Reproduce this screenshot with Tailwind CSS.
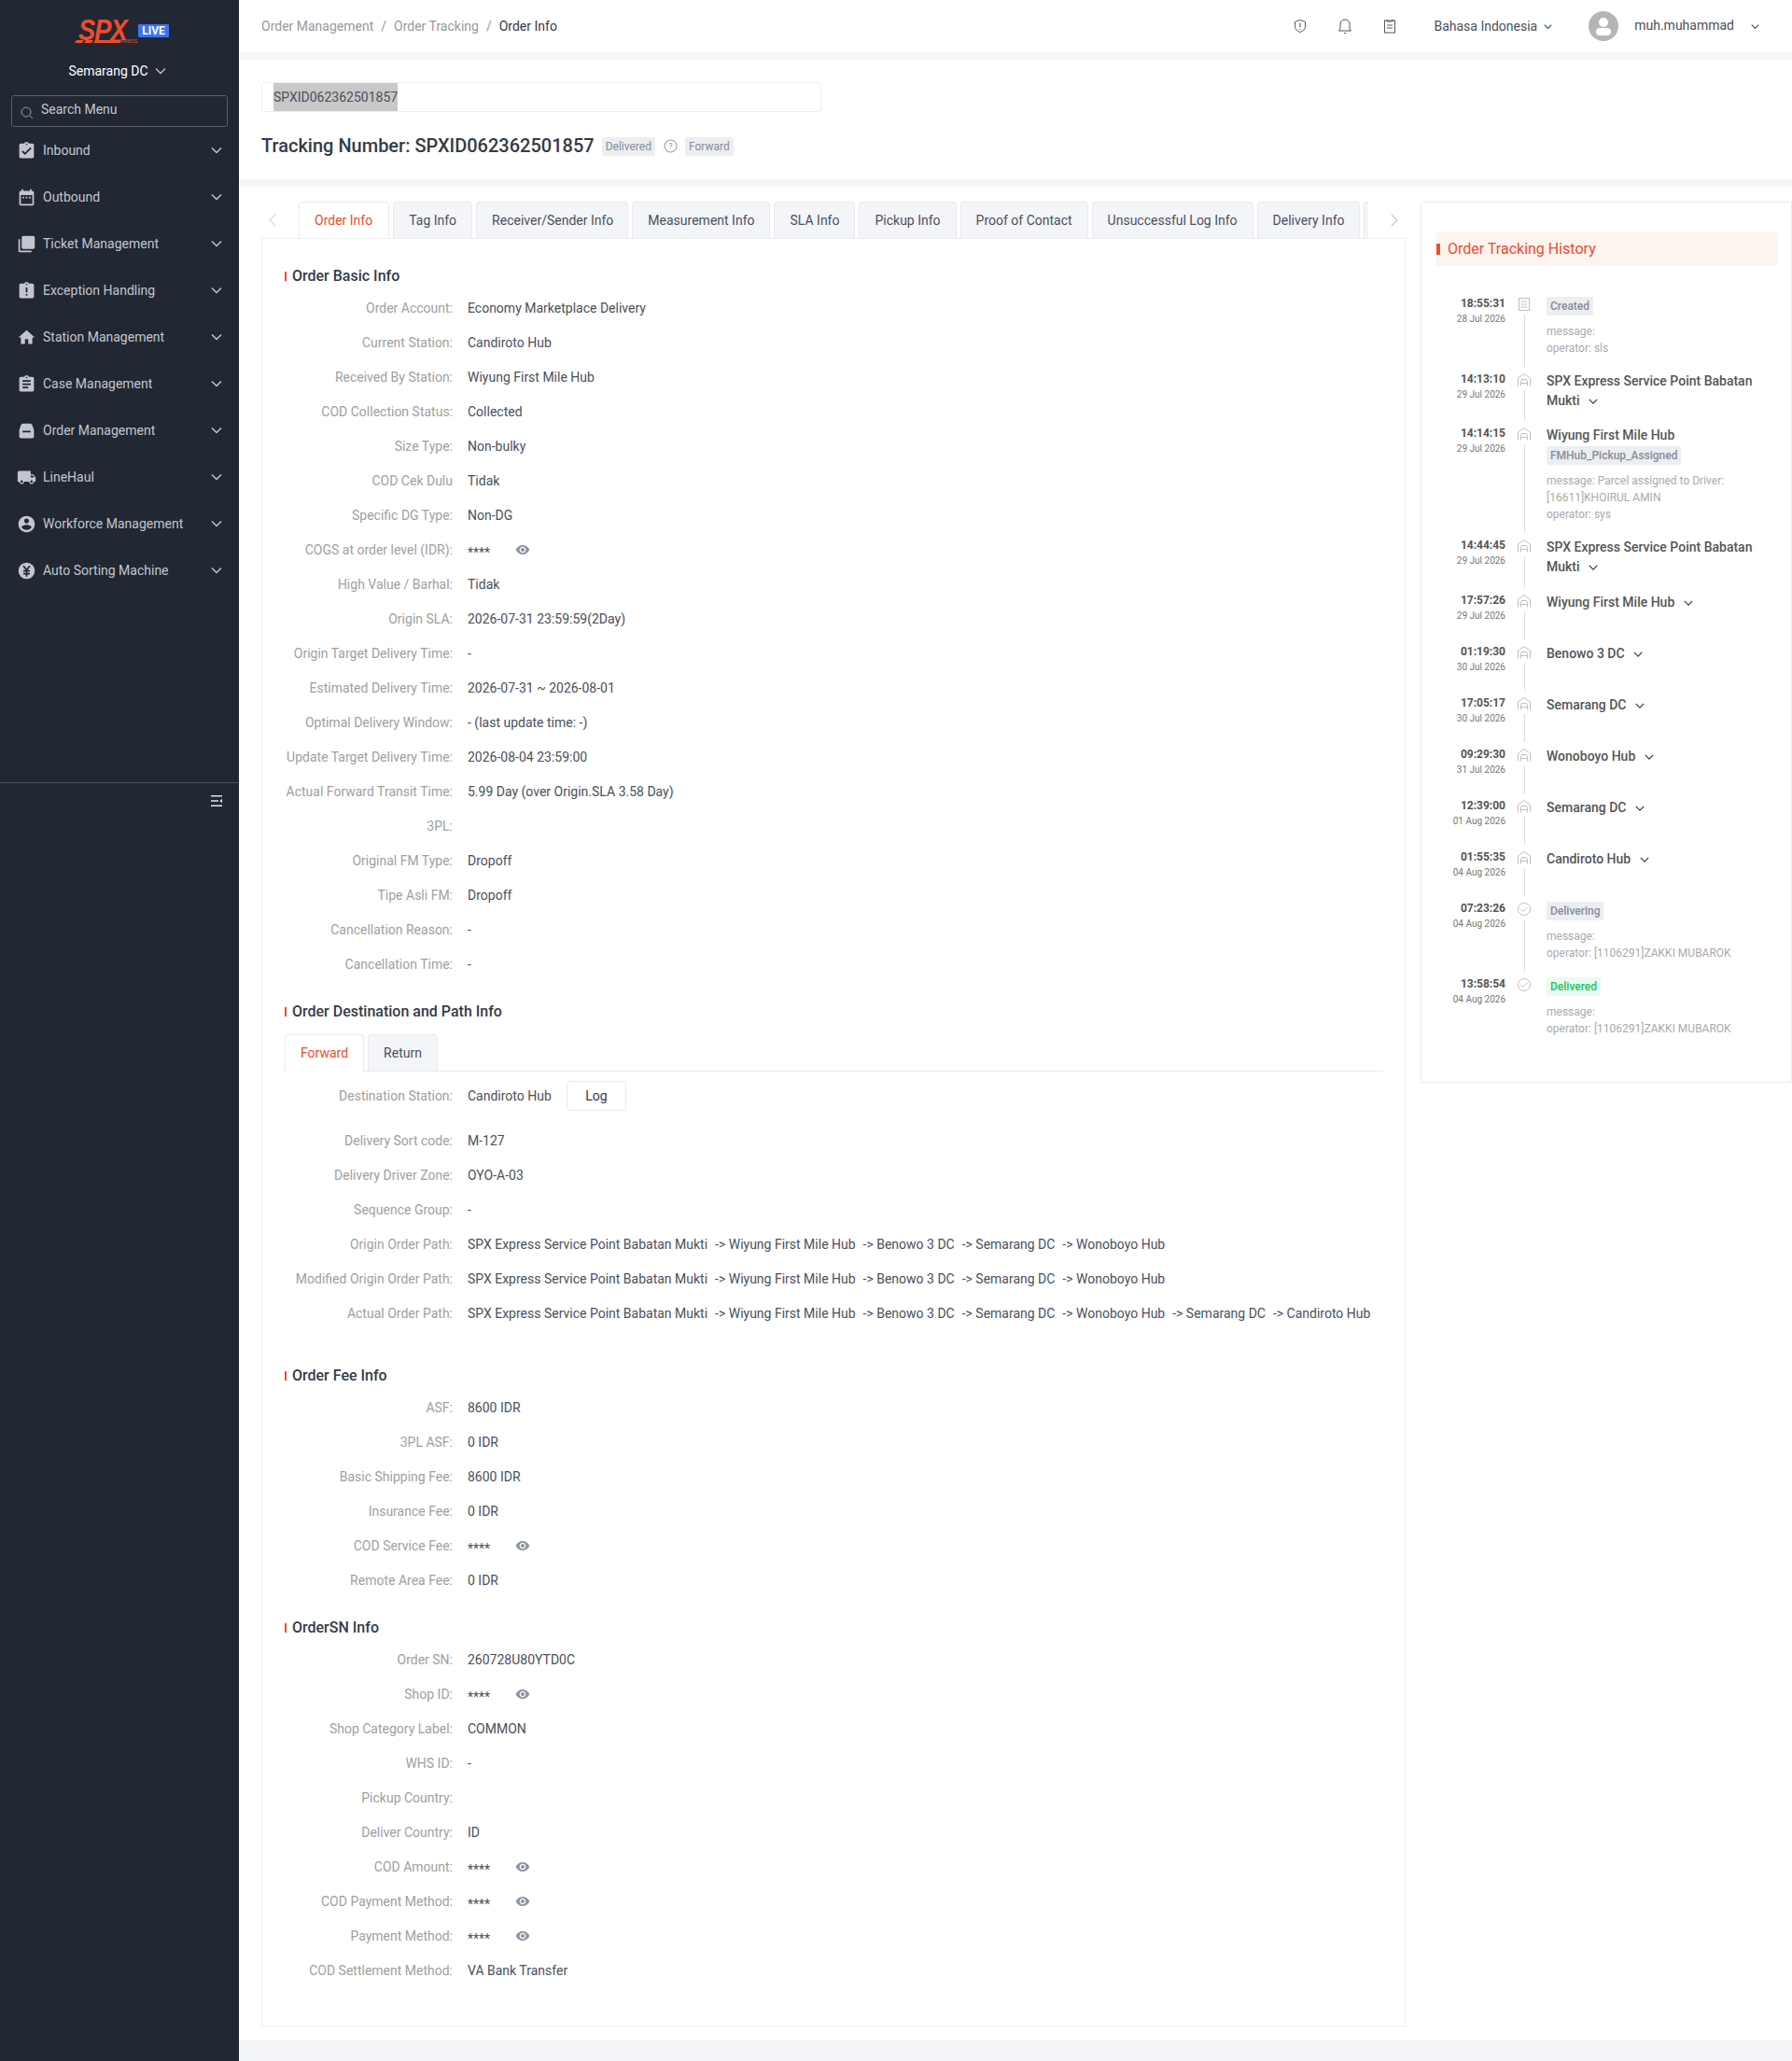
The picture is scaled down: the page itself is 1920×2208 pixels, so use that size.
<!DOCTYPE html>
<html lang="en">
<head>
    <meta charset="UTF-8">
    <meta name="viewport" content="width=device-width, initial-scale=1.0">
    <title>SPX | Order Info</title>
    <script src="https://cdn.jsdelivr.net/npm/@tailwindcss/browser@4"></script>
</head>
<body class="font-['Roboto',sans-serif] text-sm text-[#4a505c]">
<div class="flex h-[2208px] w-[1920px] overflow-hidden bg-[#f4f5f9]">

    <!-- sidebar -->
    <aside class="flex flex-col w-64 shrink-0 bg-[#212733] text-[#c3c7cd]">
        <div class="flex items-start h-[58px] pl-[79px] pt-[20px]">
            <div class="relative w-[66px] h-[26px]">
                <span class="absolute left-[5px] top-[-4px] origin-left scale-x-[.85] text-[32px] leading-[32px] font-black italic text-[#ee4d2d] tracking-[-1px] font-['Liberation_Sans',sans-serif]">SPX</span>
                <span class="absolute left-[2px] bottom-0 w-[8px] h-[3px] bg-[#ee4d2d] -skew-x-30"></span>
                <span class="absolute left-[12px] bottom-0 w-[8px] h-[3px] bg-[#ee4d2d] -skew-x-30"></span>
                <span class="absolute left-[22px] bottom-0 w-[28px] h-[3px] bg-[#ee4d2d] -skew-x-30"></span>
                <span class="absolute left-[43px] bottom-[-1px] text-[6px] leading-[6px] text-[#ee4d2d]">EXPRESS</span>
            </div>
            <span class="ml-[3px] mt-[6px] w-[33px] h-[14px] rounded-[1px] bg-[#3b74f2] text-white text-[12px] leading-[14px] font-bold text-center">LIVE</span>
        </div>
        <div class="flex items-center justify-center gap-[6px] h-9 pr-[5px] text-white">
            <span class="mr-[1px]">Semarang DC</span>
            <svg class="w-3 h-3" viewBox="0 0 12 12" fill="none" stroke="#c3c7cd" stroke-width="1.3"><path d="M1 3.5l5 5 5-5"/></svg>
        </div>
        <div class="flex items-start h-[34px] mx-3 mt-2 border border-[#5b616c] rounded-[3px] pl-[9px] pt-[6px]">
            <svg class="w-[14px] h-[14px] mt-[5px]" viewBox="0 0 14 14" fill="none" stroke="#9ca1a9" stroke-width="1"><circle cx="6" cy="6" r="5"/><path d="M10 10l3 3"/></svg>
            <span class="ml-[8px] leading-[16px]">Search Menu</span>
        </div>

        <nav>
            <div class="flex items-center h-[50px] pl-[18px] pr-[18px]">
                <svg class="w-[21px] h-[21px] fill-[#c3c7cd]" viewBox="0 0 24 24"><path d="M19 3h-4.18C14.4 1.84 13.3 1 12 1c-1.3 0-2.4.84-2.82 2H5c-1.1 0-2 .9-2 2v14c0 1.1.9 2 2 2h14c1.1 0 2-.9 2-2V5c0-1.1-.9-2-2-2zm-7 0c.55 0 1 .45 1 1s-.45 1-1 1-1-.45-1-1 .45-1 1-1zm-2 14l-4-4 1.41-1.41L10 14.17l6.59-6.59L18 9l-8 8z"/></svg>
                <span class="ml-[7px] flex-1">Inbound</span>
                <svg class="w-3 h-3" viewBox="0 0 12 12" fill="none" stroke="#c3c7cd" stroke-width="1.5"><path d="M1 3.5l5 5 5-5"/></svg>
            </div>
            <div class="flex items-center h-[50px] pl-[18px] pr-[18px]">
                <svg class="w-[21px] h-[21px] fill-[#c3c7cd]" viewBox="0 0 24 24"><path d="M9 11H7v2h2v-2zm4 0h-2v2h2v-2zm4 0h-2v2h2v-2zm2-7h-1V2h-2v2H8V2H6v2H5c-1.11 0-1.99.9-1.99 2L3 20c0 1.1.89 2 2 2h14c1.1 0 2-.9 2-2V6c0-1.1-.9-2-2-2zm0 16H5V9h14v11z"/></svg>
                <span class="ml-[7px] flex-1">Outbound</span>
                <svg class="w-3 h-3" viewBox="0 0 12 12" fill="none" stroke="#c3c7cd" stroke-width="1.5"><path d="M1 3.5l5 5 5-5"/></svg>
            </div>
            <div class="flex items-center h-[50px] pl-[18px] pr-[18px]">
                <svg class="w-[21px] h-[21px] fill-[#c3c7cd]" viewBox="0 0 24 24"><path d="M4 6H2v14c0 1.1.9 2 2 2h14v-2H4V6zm16-4H8c-1.1 0-2 .9-2 2v12c0 1.1.9 2 2 2h12c1.1 0 2-.9 2-2V4c0-1.1-.9-2-2-2z"/></svg>
                <span class="ml-[7px] flex-1">Ticket Management</span>
                <svg class="w-3 h-3" viewBox="0 0 12 12" fill="none" stroke="#c3c7cd" stroke-width="1.5"><path d="M1 3.5l5 5 5-5"/></svg>
            </div>
            <div class="flex items-center h-[50px] pl-[18px] pr-[18px]">
                <svg class="w-[21px] h-[21px] fill-[#c3c7cd]" viewBox="0 0 24 24"><path d="M19 3h-4.18C14.4 1.84 13.3 1 12 1c-1.3 0-2.4.84-2.82 2H5c-1.1 0-2 .9-2 2v14c0 1.1.9 2 2 2h14c1.1 0 2-.9 2-2V5c0-1.1-.9-2-2-2zm-6 15h-2v-2h2v2zm0-4h-2V8h2v6zm-1-9c-.55 0-1-.45-1-1s.45-1 1-1 1 .45 1 1-.45 1-1 1z"/></svg>
                <span class="ml-[7px] flex-1">Exception Handling</span>
                <svg class="w-3 h-3" viewBox="0 0 12 12" fill="none" stroke="#c3c7cd" stroke-width="1.5"><path d="M1 3.5l5 5 5-5"/></svg>
            </div>
            <div class="flex items-center h-[50px] pl-[18px] pr-[18px]">
                <svg class="w-[21px] h-[21px] fill-[#c3c7cd]" viewBox="0 0 24 24"><path d="M10 20v-6h4v6h5v-8h3L12 3 2 12h3v8z"/></svg>
                <span class="ml-[7px] flex-1">Station Management</span>
                <svg class="w-3 h-3" viewBox="0 0 12 12" fill="none" stroke="#c3c7cd" stroke-width="1.5"><path d="M1 3.5l5 5 5-5"/></svg>
            </div>
            <div class="flex items-center h-[50px] pl-[18px] pr-[18px]">
                <svg class="w-[21px] h-[21px] fill-[#c3c7cd]" viewBox="0 0 24 24"><path d="M19 3h-4.18C14.4 1.84 13.3 1 12 1c-1.3 0-2.4.84-2.82 2H5c-1.1 0-2 .9-2 2v14c0 1.1.9 2 2 2h14c1.1 0 2-.9 2-2V5c0-1.1-.9-2-2-2zm-7 0c.55 0 1 .45 1 1s-.45 1-1 1-1-.45-1-1 .45-1 1-1zm2 14H7v-2h7v2zm3-4H7v-2h10v2zm0-4H7V7h10v2z"/></svg>
                <span class="ml-[7px] flex-1">Case Management</span>
                <svg class="w-3 h-3" viewBox="0 0 12 12" fill="none" stroke="#c3c7cd" stroke-width="1.5"><path d="M1 3.5l5 5 5-5"/></svg>
            </div>
            <div class="flex items-center h-[50px] pl-[18px] pr-[18px]">
                <svg class="w-[21px] h-[21px] fill-[#c3c7cd]" viewBox="0 0 24 24"><path fill-rule="evenodd" d="M8 3h8c1.500 0 2.500.8 3 2l2 6v8c0 1.100-.9 2-2 2H5c-1.100 0-2-.9-2-2v-8l2-6c.5-1.200 1.500-2 3-2zM7 12v2h10v-2H7z"/></svg>
                <span class="ml-[7px] flex-1">Order Management</span>
                <svg class="w-3 h-3" viewBox="0 0 12 12" fill="none" stroke="#c3c7cd" stroke-width="1.5"><path d="M1 3.5l5 5 5-5"/></svg>
            </div>
            <div class="flex items-center h-[50px] pl-[18px] pr-[18px]">
                <svg class="w-[21px] h-[21px] fill-[#c3c7cd]" viewBox="0 0 24 24"><path d="M20 8h-3V4H3c-1.1 0-2 .9-2 2v11h2c0 1.66 1.34 3 3 3s3-1.34 3-3h6c0 1.66 1.34 3 3 3s3-1.34 3-3h2v-5l-3-4zM6 18.5c-.83 0-1.5-.67-1.5-1.5s.67-1.5 1.5-1.5 1.5.67 1.5 1.5-.67 1.5-1.5 1.5zm13.5-9l1.96 2.5H17V9.5h2.5zm-1.5 9c-.83 0-1.5-.67-1.5-1.5s.67-1.5 1.5-1.5 1.5.67 1.5 1.5-.67 1.5-1.5 1.5z"/></svg>
                <span class="ml-[7px] flex-1">LineHaul</span>
                <svg class="w-3 h-3" viewBox="0 0 12 12" fill="none" stroke="#c3c7cd" stroke-width="1.5"><path d="M1 3.5l5 5 5-5"/></svg>
            </div>
            <div class="flex items-center h-[50px] pl-[18px] pr-[18px]">
                <svg class="w-[21px] h-[21px] fill-[#c3c7cd]" viewBox="0 0 24 24"><path d="M12 2C6.48 2 2 6.48 2 12s4.48 10 10 10 10-4.48 10-10S17.52 2 12 2zm0 3c1.66 0 3 1.34 3 3s-1.34 3-3 3-3-1.34-3-3 1.34-3 3-3zm0 14.2c-2.5 0-4.71-1.28-6-3.22.03-1.99 4-3.08 6-3.08 1.99 0 5.97 1.09 6 3.08-1.29 1.94-3.5 3.22-6 3.22z"/></svg>
                <span class="ml-[7px] flex-1">Workforce Management</span>
                <svg class="w-3 h-3" viewBox="0 0 12 12" fill="none" stroke="#c3c7cd" stroke-width="1.5"><path d="M1 3.5l5 5 5-5"/></svg>
            </div>
            <div class="flex items-center h-[50px] pl-[18px] pr-[18px]">
                <svg class="w-[21px] h-[21px]" viewBox="0 0 24 24"><circle cx="12" cy="12" r="10" fill="#c3c7cd"/><path d="M8 6l4 5 4-5M12 11v8M8 12h8M8 15.500h8" fill="none" stroke="#212733" stroke-width="2"/></svg>
                <span class="ml-[7px] flex-1">Auto Sorting Machine</span>
                <svg class="w-3 h-3" viewBox="0 0 12 12" fill="none" stroke="#c3c7cd" stroke-width="1.5"><path d="M1 3.5l5 5 5-5"/></svg>
            </div>
        </nav>

        <div class="flex justify-end h-10 mt-[202px] border-t border-[#4a505b] pr-[18px] pt-[13px]">
            <svg class="w-[12px] h-[12px]" viewBox="0 0 12 12" fill="#e4e6e9"><path d="M0 0h12v1.500H0zM0 5.200h8v1.500H0zM0 10.500h12V12H0zM12 3.800v4.400L9.300 6z"/></svg>
        </div>
    </aside>

    <main class="flex-1 min-w-0 flex flex-col">
        <!-- top header -->
        <header class="flex items-center h-14 shrink-0 mb-2 bg-white pl-6">
            <span class="text-[#999]">Order Management</span>
            <span class="text-[#999] mx-2">/</span>
            <span class="text-[#999]">Order Tracking</span>
            <span class="text-[#999] mx-2">/</span>
            <span class="text-[#333b47]">Order Info</span>

            <svg class="w-4 h-4 ml-auto" viewBox="0 0 16 16" fill="none" stroke="#555" stroke-width="1"><path d="M8 1.500l5.500 1.800v5c0 3-2.500 5-5.500 6.200-3-1.200-5.500-3.200-5.500-6.200v-5z"/><path d="M8 4.500v5M8 11v1"/></svg>
            <svg class="w-4 h-[18px] ml-8" viewBox="0 0 16 18" fill="none" stroke="#555" stroke-width="1"><path d="M1.500 14h13l-1.500-2V7c0-3-2-5-5-5S3 4 3 7v5z"/><path d="M7 16.500h2"/></svg>
            <svg class="w-[14px] h-4 ml-[33px]" viewBox="0 0 14 16" fill="none" stroke="#555" stroke-width="1"><rect x="1.500" y="2" width="11" height="13"/><path d="M4 1v2h6V1M4 7h6M4 10h6"/></svg>
            <span class="ml-[40px]">Bahasa Indonesia</span>
            <svg class="w-[9px] h-[9px] ml-[7px]" viewBox="0 0 12 12" fill="none" stroke="#4a505c" stroke-width="1.700"><path d="M1 3.500l5 5 5-5"/></svg>
            <div class="relative w-8 h-8 ml-[39px] rounded-full bg-[#b5b5b5] overflow-hidden">
                <span class="absolute left-[11px] top-[7px] w-[10px] h-[10px] rounded-full bg-white"></span>
                <span class="absolute left-[8px] top-[18px] w-4 h-2 rounded-[4px] bg-white"></span>
            </div>
            <span class="ml-[17px] mb-[3px]">muh.muhammad</span>
            <svg class="w-[9px] h-[9px] ml-[18px] mr-[35px]" viewBox="0 0 12 12" fill="none" stroke="#4a505c" stroke-width="1.700"><path d="M1 3.500l5 5 5-5"/></svg>
        </header>

        <!-- tracking number -->
        <section class="h-32 shrink-0 mb-2 bg-white pl-6 pt-6">
            <div class="flex items-center w-[600px] h-8 border border-[#eceef1] rounded-[3px] pl-[12px]">
                <span class="bg-[#c8c8c8] leading-[30px]">SPXID062362501857</span>
            </div>
            <div class="flex items-center h-5 mt-[26px]">
                <h1 class="text-xl font-medium text-[#333b47]">Tracking Number: SPXID062362501857</h1>
                <span class="ml-2 mt-[1px] h-5 px-1 rounded-[2px] bg-[#eceef1] text-xs leading-5 text-[#868d99]">Delivered</span>
                <svg class="w-[15px] h-[15px] ml-[9px]" viewBox="0 0 15 15" fill="none" stroke="#8d929b"><circle cx="7.500" cy="7.500" r="6.500"/><text x="7.500" y="10.800" font-size="9" text-anchor="middle" fill="#8d929b" stroke="none">?</text></svg>
                <span class="ml-[8px] mt-[1px] h-5 px-1 rounded-[2px] bg-[#eceef1] text-xs leading-5 text-[#868d99]">Forward</span>
            </div>
        </section>

        <!-- detail area -->
        <section class="flex items-start gap-4 h-[1986px] shrink-0 bg-white pl-6 pt-4">
            <div class="w-[1226px] shrink-0">
                <div class="flex h-[39px]">
                    <div class="flex items-center w-10 pl-[7px]">
                        <svg class="w-[10px] h-[14px]" viewBox="0 0 10 14" fill="none" stroke="#d5d7db" stroke-width="1.200"><path d="M8 1L2 7l6 6"/></svg>
                    </div>
                    <div class="flex gap-1 flex-1 overflow-hidden">
                        <span class="h-[40px] pl-4 pr-[17px] leading-[38px] border border-b-0 border-[#e8eaee] rounded-t-[4px] bg-white text-[#ee4d2d] relative z-10 shrink-0">Order Info</span>
                        <span class="h-[39px] px-4 leading-[38px] border border-b-0 border-[#e8eaee] rounded-t-[4px] bg-[#f4f5f9] shrink-0">Tag Info</span>
                        <span class="h-[39px] pl-4 pr-[15px] leading-[38px] border border-b-0 border-[#e8eaee] rounded-t-[4px] bg-[#f4f5f9] shrink-0">Receiver/Sender Info</span>
                        <span class="h-[39px] px-4 leading-[38px] border border-b-0 border-[#e8eaee] rounded-t-[4px] bg-[#f4f5f9] shrink-0">Measurement Info</span>
                        <span class="h-[39px] px-4 leading-[38px] border border-b-0 border-[#e8eaee] rounded-t-[4px] bg-[#f4f5f9] shrink-0">SLA Info</span>
                        <span class="h-[39px] px-4 leading-[38px] border border-b-0 border-[#e8eaee] rounded-t-[4px] bg-[#f4f5f9] shrink-0">Pickup Info</span>
                        <span class="h-[39px] px-4 leading-[38px] border border-b-0 border-[#e8eaee] rounded-t-[4px] bg-[#f4f5f9] shrink-0">Proof of Contact</span>
                        <span class="h-[39px] px-4 leading-[38px] border border-b-0 border-[#e8eaee] rounded-t-[4px] bg-[#f4f5f9] shrink-0">Unsuccessful Log Info</span>
                        <span class="h-[39px] px-4 leading-[38px] border border-b-0 border-[#e8eaee] rounded-t-[4px] bg-[#f4f5f9] shrink-0">Delivery Info</span>
                        <span class="h-[39px] w-[5px] border border-b-0 border-r-0 border-[#e8eaee] rounded-tl-[4px] bg-[#f4f5f9] shrink-0"></span>
                    </div>
                    <div class="flex items-center justify-center w-[39px] shrink-0 pl-[15px]">
                        <svg class="w-[10px] h-[14px]" viewBox="0 0 10 14" fill="none" stroke="#c4c7cc" stroke-width="1.200"><path d="M2 1l6 6-6 6"/></svg>
                    </div>
                </div>

                <div class="h-[1916px] border border-[#eceef1] pl-[23px] pr-[23px] pt-[29px]">
                    <!-- Order Basic Info -->
                    <h2 class="flex items-center h-[22px] text-base font-medium text-[#333b47]"><i class="w-[2px] h-[10px] ml-px mr-[6px] bg-[#ee4d2d]"></i>Order Basic Info</h2>
                    <dl class="grid grid-cols-[181px_1fr] gap-x-4 gap-y-4 mt-[13px] leading-[21px] [&_dt]:text-right [&_dt]:text-[#a0a0a0]">
                        <dt>Order Account:</dt><dd>Economy Marketplace Delivery</dd>
                        <dt>Current Station:</dt><dd>Candiroto Hub</dd>
                        <dt>Received By Station:</dt><dd>Wiyung First Mile Hub</dd>
                        <dt>COD Collection Status:</dt><dd>Collected</dd>
                        <dt>Size Type:</dt><dd>Non-bulky</dd>
                        <dt>COD Cek Dulu</dt><dd>Tidak</dd>
                        <dt>Specific DG Type:</dt><dd>Non-DG</dd>
                        <dt>COGS at order level (IDR):</dt>
                        <dd class="flex items-center"><span class="relative top-[3px]">****</span><svg class="w-4 h-4 ml-[27px] mb-px fill-[#8a95a0]" viewBox="0 0 24 24"><path d="M12 4.500C7 4.500 2.730 7.610 1 12c1.730 4.390 6 7.500 11 7.500s9.270-3.110 11-7.500c-1.730-4.390-6-7.500-11-7.500zM12 17c-2.760 0-5-2.240-5-5s2.240-5 5-5 5 2.240 5 5-2.240 5-5 5zm0-8c-1.660 0-3 1.340-3 3s1.340 3 3 3 3-1.340 3-3-1.340-3-3-3z"/></svg></dd>
                        <dt>High Value / Barhal:</dt><dd>Tidak</dd>
                        <dt>Origin SLA:</dt><dd>2026-07-31 23:59:59(2Day)</dd>
                        <dt>Origin Target Delivery Time:</dt><dd>-</dd>
                        <dt>Estimated Delivery Time:</dt><dd>2026-07-31 ~ 2026-08-01</dd>
                        <dt>Optimal Delivery Window:</dt><dd>- (last update time: -)</dd>
                        <dt>Update Target Delivery Time:</dt><dd>2026-08-04 23:59:00</dd>
                        <dt>Actual Forward Transit Time:</dt><dd>5.99 Day (over Origin.SLA 3.58 Day)</dd>
                        <dt>3PL:</dt><dd class="h-[21px]"></dd>
                        <dt>Original FM Type:</dt><dd>Dropoff</dd>
                        <dt>Tipe Asli FM:</dt><dd>Dropoff</dd>
                        <dt>Cancellation Reason:</dt><dd>-</dd>
                        <dt>Cancellation Time:</dt><dd>-</dd>
                    </dl>

                    <!-- Order Destination and Path Info -->
                    <h2 class="flex items-center h-[22px] mt-[29px] text-base font-medium text-[#333b47]"><i class="w-[2px] h-[10px] ml-px mr-[6px] bg-[#ee4d2d]"></i>Order Destination and Path Info</h2>
                    <div class="flex gap-1 h-10 mt-[13px] pl-px border-b border-[#e8eaee]">
                        <span class="h-10 w-[85px] text-center leading-[38px] border border-b-0 border-[#e8eaee] rounded-t-[4px] bg-white text-[#ee4d2d]">Forward</span>
                        <span class="h-[39px] w-[75px] text-center leading-[38px] border border-b-0 border-[#e8eaee] rounded-t-[4px] bg-[#f4f5f9]">Return</span>
                    </div>
                    <dl class="grid grid-cols-[181px_1fr] gap-x-4 gap-y-4 mt-[10px] leading-[21px] [&_dt]:text-right [&_dt]:text-[#a0a0a0]">
                        <dt class="self-center mb-[6px]">Destination Station:</dt>
                        <dd class="flex items-center mb-[6px]">Candiroto Hub<button class="ml-4 h-8 w-16 border border-[#e8eaee] rounded-[3px] text-[#333b47]">Log</button></dd>
                        <dt>Delivery Sort code:</dt><dd>M-127</dd>
                        <dt>Delivery Driver Zone:</dt><dd>OYO-A-03</dd>
                        <dt>Sequence Group:</dt><dd>-</dd>
                        <dt>Origin Order Path:</dt><dd>SPX Express Service Point Babatan Mukti &nbsp;<span class="pl-px">-&gt;</span> Wiyung First Mile Hub &nbsp;<span class="pl-px">-&gt;</span> Benowo 3 DC &nbsp;<span class="pl-px">-&gt;</span> Semarang DC &nbsp;<span class="pl-px">-&gt;</span> Wonoboyo Hub</dd>
                        <dt>Modified Origin Order Path:</dt><dd>SPX Express Service Point Babatan Mukti &nbsp;<span class="pl-px">-&gt;</span> Wiyung First Mile Hub &nbsp;<span class="pl-px">-&gt;</span> Benowo 3 DC &nbsp;<span class="pl-px">-&gt;</span> Semarang DC &nbsp;<span class="pl-px">-&gt;</span> Wonoboyo Hub</dd>
                        <dt>Actual Order Path:</dt><dd>SPX Express Service Point Babatan Mukti &nbsp;<span class="pl-px">-&gt;</span> Wiyung First Mile Hub &nbsp;<span class="pl-px">-&gt;</span> Benowo 3 DC &nbsp;<span class="pl-px">-&gt;</span> Semarang DC &nbsp;<span class="pl-px">-&gt;</span> Wonoboyo Hub &nbsp;<span class="pl-px">-&gt;</span> Semarang DC &nbsp;<span class="pl-px">-&gt;</span> Candiroto Hub</dd>
                    </dl>

                    <!-- Order Fee Info -->
                    <h2 class="flex items-center h-[22px] mt-[45px] text-base font-medium text-[#333b47]"><i class="w-[2px] h-[10px] ml-px mr-[6px] bg-[#ee4d2d]"></i>Order Fee Info</h2>
                    <dl class="grid grid-cols-[181px_1fr] gap-x-4 gap-y-4 mt-[13px] leading-[21px] [&_dt]:text-right [&_dt]:text-[#a0a0a0]">
                        <dt>ASF:</dt><dd>8600 IDR</dd>
                        <dt>3PL ASF:</dt><dd>0 IDR</dd>
                        <dt>Basic Shipping Fee:</dt><dd>8600 IDR</dd>
                        <dt>Insurance Fee:</dt><dd>0 IDR</dd>
                        <dt>COD Service Fee:</dt>
                        <dd class="flex items-center"><span class="relative top-[3px]">****</span><svg class="w-4 h-4 ml-[27px] mb-px fill-[#8a95a0]" viewBox="0 0 24 24"><path d="M12 4.500C7 4.500 2.730 7.610 1 12c1.730 4.390 6 7.500 11 7.500s9.270-3.110 11-7.500c-1.730-4.390-6-7.500-11-7.500zM12 17c-2.760 0-5-2.240-5-5s2.240-5 5-5 5 2.240 5 5-2.240 5-5 5zm0-8c-1.660 0-3 1.340-3 3s1.340 3 3 3 3-1.340 3-3-1.340-3-3-3z"/></svg></dd>
                        <dt>Remote Area Fee:</dt><dd>0 IDR</dd>
                    </dl>

                    <!-- OrderSN Info -->
                    <h2 class="flex items-center h-[22px] mt-[29px] text-base font-medium text-[#333b47]"><i class="w-[2px] h-[10px] ml-px mr-[6px] bg-[#ee4d2d]"></i>OrderSN Info</h2>
                    <dl class="grid grid-cols-[181px_1fr] gap-x-4 gap-y-4 mt-[13px] leading-[21px] [&_dt]:text-right [&_dt]:text-[#a0a0a0]">
                        <dt>Order SN:</dt><dd>260728U80YTD0C</dd>
                        <dt>Shop ID:</dt>
                        <dd class="flex items-center"><span class="relative top-[3px]">****</span><svg class="w-4 h-4 ml-[27px] mb-px fill-[#8a95a0]" viewBox="0 0 24 24"><path d="M12 4.500C7 4.500 2.730 7.610 1 12c1.730 4.390 6 7.500 11 7.500s9.270-3.110 11-7.500c-1.730-4.390-6-7.500-11-7.500zM12 17c-2.760 0-5-2.240-5-5s2.240-5 5-5 5 2.240 5 5-2.240 5-5 5zm0-8c-1.660 0-3 1.340-3 3s1.340 3 3 3 3-1.340 3-3-1.340-3-3-3z"/></svg></dd>
                        <dt>Shop Category Label:</dt><dd>COMMON</dd>
                        <dt>WHS ID:</dt><dd>-</dd>
                        <dt>Pickup Country:</dt><dd class="h-[21px]"></dd>
                        <dt>Deliver Country:</dt><dd>ID</dd>
                        <dt>COD Amount:</dt>
                        <dd class="flex items-center"><span class="relative top-[3px]">****</span><svg class="w-4 h-4 ml-[27px] mb-px fill-[#8a95a0]" viewBox="0 0 24 24"><path d="M12 4.500C7 4.500 2.730 7.610 1 12c1.730 4.390 6 7.500 11 7.500s9.270-3.110 11-7.500c-1.730-4.390-6-7.500-11-7.500zM12 17c-2.760 0-5-2.240-5-5s2.240-5 5-5 5 2.240 5 5-2.240 5-5 5zm0-8c-1.660 0-3 1.340-3 3s1.340 3 3 3 3-1.340 3-3-1.340-3-3-3z"/></svg></dd>
                        <dt>COD Payment Method:</dt>
                        <dd class="flex items-center"><span class="relative top-[3px]">****</span><svg class="w-4 h-4 ml-[27px] mb-px fill-[#8a95a0]" viewBox="0 0 24 24"><path d="M12 4.500C7 4.500 2.730 7.610 1 12c1.730 4.390 6 7.500 11 7.500s9.270-3.110 11-7.500c-1.730-4.390-6-7.500-11-7.500zM12 17c-2.760 0-5-2.240-5-5s2.240-5 5-5 5 2.240 5 5-2.240 5-5 5zm0-8c-1.660 0-3 1.340-3 3s1.340 3 3 3 3-1.340 3-3-1.340-3-3-3z"/></svg></dd>
                        <dt>Payment Method:</dt>
                        <dd class="flex items-center"><span class="relative top-[3px]">****</span><svg class="w-4 h-4 ml-[27px] mb-px fill-[#8a95a0]" viewBox="0 0 24 24"><path d="M12 4.500C7 4.500 2.730 7.610 1 12c1.730 4.390 6 7.500 11 7.500s9.270-3.110 11-7.500c-1.730-4.390-6-7.500-11-7.500zM12 17c-2.760 0-5-2.240-5-5s2.240-5 5-5 5 2.240 5 5-2.240 5-5 5zm0-8c-1.660 0-3 1.340-3 3s1.340 3 3 3 3-1.340 3-3-1.340-3-3-3z"/></svg></dd>
                        <dt>COD Settlement Method:</dt><dd>VA Bank Transfer</dd>
                    </dl>
                </div>
            </div>

            <!-- tracking history -->
            <div class="w-[398px] h-[944px] shrink-0 border border-[#e8eaee] rounded-tl-[3px] pt-[32px] pl-4">
                <div class="flex items-center w-[366px] h-9 rounded-[3px] bg-[#fdf3ef] text-base text-[#ee4d2d] pr-4">
                    <i class="w-1 h-[12px] mr-[8px] bg-[#ee4d2d]"></i>Order Tracking History
                </div>
                <div class="mt-[31px]">
                    <div class="flex h-[81px]">
                        <div class="w-[74px] text-right pt-[1px]"><p class="text-xs leading-[16px] font-bold text-[#555]">18:55:31</p><p class="text-[10px] leading-[18px] text-[#777]">28 Jul 2026</p></div>
                        <div class="flex flex-col items-center w-4 ml-3 pt-[3px] pb-[4px]">
                            <svg class="w-3 h-[14px] shrink-0" viewBox="0 0 12 14" fill="none" stroke="#bdbfc4"><rect x=".5" y=".5" width="11" height="13"/><path d="M3 4h6M3 7h6M3 10h6"/></svg>
                            <i class="w-px flex-1 mt-[4px] bg-[#dcdcdc]"></i>
                        </div>
                        <div class="ml-4 pt-[2px]">
                            <span class="block w-fit h-5 px-1 rounded-[2px] bg-[#eceef1] text-xs leading-5 font-medium text-[#868d99]">Created</span>
                            <p class="mt-[8px] text-xs leading-[18px] text-[#aaa]">message:<br>operator: sls</p>
                        </div>
                    </div>
                    <div class="flex h-[58px]">
                        <div class="w-[74px] text-right pt-[1px]"><p class="text-xs leading-[16px] font-bold text-[#555]">14:13:10</p><p class="text-[10px] leading-[18px] text-[#777]">29 Jul 2026</p></div>
                        <div class="flex flex-col items-center w-4 ml-3 pt-[3px] pb-[4px]">
                            <svg class="w-[14px] h-[14px] shrink-0" viewBox="0 0 14 14" fill="none" stroke="#bdbfc4"><path d="M.5 13.500V5L7 .5 13.500 5v8.500"/><path d="M3.500 13.500v-5l1-2h5l1 2v5M3.500 10.500h7"/></svg>
                            <i class="w-px flex-1 mt-[4px] bg-[#dcdcdc]"></i>
                        </div>
                        <p class="ml-4 w-[240px] pt-px font-medium leading-[21px] text-[#555]">SPX Express Service Point Babatan Mukti <svg class="inline w-[10px] h-[10px] ml-[6px]" viewBox="0 0 12 12" fill="none" stroke="#333b47" stroke-width="1.500"><path d="M1 3.500l5 5 5-5"/></svg></p>
                    </div>
                    <div class="flex h-[120px]">
                        <div class="w-[74px] text-right pt-[1px]"><p class="text-xs leading-[16px] font-bold text-[#555]">14:14:15</p><p class="text-[10px] leading-[18px] text-[#777]">29 Jul 2026</p></div>
                        <div class="flex flex-col items-center w-4 ml-3 pt-[3px] pb-[4px]">
                            <svg class="w-[14px] h-[14px] shrink-0" viewBox="0 0 14 14" fill="none" stroke="#bdbfc4"><path d="M.5 13.500V5L7 .5 13.500 5v8.500"/><path d="M3.500 13.500v-5l1-2h5l1 2v5M3.500 10.500h7"/></svg>
                            <i class="w-px flex-1 mt-[4px] bg-[#dcdcdc]"></i>
                        </div>
                        <div class="ml-4 w-[240px] pt-px">
                            <p class="font-medium leading-[21px] text-[#555]">Wiyung First Mile Hub</p>
                            <span class="block w-fit h-5 mt-px px-1 rounded-[2px] bg-[#eceef1] text-xs leading-5 font-medium text-[#868d99]">FMHub_Pickup_Assigned</span>
                            <p class="mt-[8px] text-xs leading-[18px] text-[#aaa]">message: Parcel assigned to Driver:<br>[16611]KHOIRUL AMIN<br>operator: sys</p>
                        </div>
                    </div>
                    <div class="flex h-[59px]">
                        <div class="w-[74px] text-right pt-[1px]"><p class="text-xs leading-[16px] font-bold text-[#555]">14:44:45</p><p class="text-[10px] leading-[18px] text-[#777]">29 Jul 2026</p></div>
                        <div class="flex flex-col items-center w-4 ml-3 pt-[3px] pb-[4px]">
                            <svg class="w-[14px] h-[14px] shrink-0" viewBox="0 0 14 14" fill="none" stroke="#bdbfc4"><path d="M.5 13.500V5L7 .5 13.500 5v8.500"/><path d="M3.500 13.500v-5l1-2h5l1 2v5M3.500 10.500h7"/></svg>
                            <i class="w-px flex-1 mt-[4px] bg-[#dcdcdc]"></i>
                        </div>
                        <p class="ml-4 w-[240px] pt-px font-medium leading-[21px] text-[#555]">SPX Express Service Point Babatan Mukti <svg class="inline w-[10px] h-[10px] ml-[6px]" viewBox="0 0 12 12" fill="none" stroke="#333b47" stroke-width="1.500"><path d="M1 3.500l5 5 5-5"/></svg></p>
                    </div>
                    <div class="flex h-[55px]">
                        <div class="w-[74px] text-right pt-[1px]"><p class="text-xs leading-[16px] font-bold text-[#555]">17:57:26</p><p class="text-[10px] leading-[18px] text-[#777]">29 Jul 2026</p></div>
                        <div class="flex flex-col items-center w-4 ml-3 pt-[3px] pb-[4px]">
                            <svg class="w-[14px] h-[14px] shrink-0" viewBox="0 0 14 14" fill="none" stroke="#bdbfc4"><path d="M.5 13.500V5L7 .5 13.500 5v8.500"/><path d="M3.500 13.500v-5l1-2h5l1 2v5M3.500 10.500h7"/></svg>
                            <i class="w-px flex-1 mt-[4px] bg-[#dcdcdc]"></i>
                        </div>
                        <p class="ml-4 w-[240px] pt-px font-medium leading-[21px] text-[#555]">Wiyung First Mile Hub <svg class="inline w-[10px] h-[10px] ml-[6px]" viewBox="0 0 12 12" fill="none" stroke="#333b47" stroke-width="1.500"><path d="M1 3.500l5 5 5-5"/></svg></p>
                    </div>
                    <div class="flex h-[55px]">
                        <div class="w-[74px] text-right pt-[1px]"><p class="text-xs leading-[16px] font-bold text-[#555]">01:19:30</p><p class="text-[10px] leading-[18px] text-[#777]">30 Jul 2026</p></div>
                        <div class="flex flex-col items-center w-4 ml-3 pt-[3px] pb-[4px]">
                            <svg class="w-[14px] h-[14px] shrink-0" viewBox="0 0 14 14" fill="none" stroke="#bdbfc4"><path d="M.5 13.500V5L7 .5 13.500 5v8.500"/><path d="M3.500 13.500v-5l1-2h5l1 2v5M3.500 10.500h7"/></svg>
                            <i class="w-px flex-1 mt-[4px] bg-[#dcdcdc]"></i>
                        </div>
                        <p class="ml-4 w-[240px] pt-px font-medium leading-[21px] text-[#555]">Benowo 3 DC <svg class="inline w-[10px] h-[10px] ml-[6px]" viewBox="0 0 12 12" fill="none" stroke="#333b47" stroke-width="1.500"><path d="M1 3.500l5 5 5-5"/></svg></p>
                    </div>
                    <div class="flex h-[55px]">
                        <div class="w-[74px] text-right pt-[1px]"><p class="text-xs leading-[16px] font-bold text-[#555]">17:05:17</p><p class="text-[10px] leading-[18px] text-[#777]">30 Jul 2026</p></div>
                        <div class="flex flex-col items-center w-4 ml-3 pt-[3px] pb-[4px]">
                            <svg class="w-[14px] h-[14px] shrink-0" viewBox="0 0 14 14" fill="none" stroke="#bdbfc4"><path d="M.5 13.500V5L7 .5 13.500 5v8.500"/><path d="M3.500 13.500v-5l1-2h5l1 2v5M3.500 10.500h7"/></svg>
                            <i class="w-px flex-1 mt-[4px] bg-[#dcdcdc]"></i>
                        </div>
                        <p class="ml-4 w-[240px] pt-px font-medium leading-[21px] text-[#555]">Semarang DC <svg class="inline w-[10px] h-[10px] ml-[6px]" viewBox="0 0 12 12" fill="none" stroke="#333b47" stroke-width="1.500"><path d="M1 3.500l5 5 5-5"/></svg></p>
                    </div>
                    <div class="flex h-[55px]">
                        <div class="w-[74px] text-right pt-[1px]"><p class="text-xs leading-[16px] font-bold text-[#555]">09:29:30</p><p class="text-[10px] leading-[18px] text-[#777]">31 Jul 2026</p></div>
                        <div class="flex flex-col items-center w-4 ml-3 pt-[3px] pb-[4px]">
                            <svg class="w-[14px] h-[14px] shrink-0" viewBox="0 0 14 14" fill="none" stroke="#bdbfc4"><path d="M.5 13.500V5L7 .5 13.500 5v8.500"/><path d="M3.500 13.500v-5l1-2h5l1 2v5M3.500 10.500h7"/></svg>
                            <i class="w-px flex-1 mt-[4px] bg-[#dcdcdc]"></i>
                        </div>
                        <p class="ml-4 w-[240px] pt-px font-medium leading-[21px] text-[#555]">Wonoboyo Hub <svg class="inline w-[10px] h-[10px] ml-[6px]" viewBox="0 0 12 12" fill="none" stroke="#333b47" stroke-width="1.500"><path d="M1 3.500l5 5 5-5"/></svg></p>
                    </div>
                    <div class="flex h-[55px]">
                        <div class="w-[74px] text-right pt-[1px]"><p class="text-xs leading-[16px] font-bold text-[#555]">12:39:00</p><p class="text-[10px] leading-[18px] text-[#777]">01 Aug 2026</p></div>
                        <div class="flex flex-col items-center w-4 ml-3 pt-[3px] pb-[4px]">
                            <svg class="w-[14px] h-[14px] shrink-0" viewBox="0 0 14 14" fill="none" stroke="#bdbfc4"><path d="M.5 13.500V5L7 .5 13.500 5v8.500"/><path d="M3.500 13.500v-5l1-2h5l1 2v5M3.500 10.500h7"/></svg>
                            <i class="w-px flex-1 mt-[4px] bg-[#dcdcdc]"></i>
                        </div>
                        <p class="ml-4 w-[240px] pt-px font-medium leading-[21px] text-[#555]">Semarang DC <svg class="inline w-[10px] h-[10px] ml-[6px]" viewBox="0 0 12 12" fill="none" stroke="#333b47" stroke-width="1.500"><path d="M1 3.500l5 5 5-5"/></svg></p>
                    </div>
                    <div class="flex h-[55px]">
                        <div class="w-[74px] text-right pt-[1px]"><p class="text-xs leading-[16px] font-bold text-[#555]">01:55:35</p><p class="text-[10px] leading-[18px] text-[#777]">04 Aug 2026</p></div>
                        <div class="flex flex-col items-center w-4 ml-3 pt-[3px] pb-[4px]">
                            <svg class="w-[14px] h-[14px] shrink-0" viewBox="0 0 14 14" fill="none" stroke="#bdbfc4"><path d="M.5 13.500V5L7 .5 13.500 5v8.500"/><path d="M3.500 13.500v-5l1-2h5l1 2v5M3.500 10.500h7"/></svg>
                            <i class="w-px flex-1 mt-[4px] bg-[#dcdcdc]"></i>
                        </div>
                        <p class="ml-4 w-[240px] pt-px font-medium leading-[21px] text-[#555]">Candiroto Hub <svg class="inline w-[10px] h-[10px] ml-[6px]" viewBox="0 0 12 12" fill="none" stroke="#333b47" stroke-width="1.500"><path d="M1 3.500l5 5 5-5"/></svg></p>
                    </div>
                    <div class="flex h-[81px]">
                        <div class="w-[74px] text-right pt-[1px]"><p class="text-xs leading-[16px] font-bold text-[#555]">07:23:26</p><p class="text-[10px] leading-[18px] text-[#777]">04 Aug 2026</p></div>
                        <div class="flex flex-col items-center w-4 ml-3 pt-[3px] pb-[4px]">
                            <svg class="w-[14px] h-[14px] shrink-0" viewBox="0 0 14 14" fill="none" stroke="#bdbfc4"><circle cx="7" cy="7" r="6.500"/><path d="M3.500 7l2.500 2.500 4.500-4.500"/></svg>
                            <i class="w-px flex-1 mt-[4px] bg-[#dcdcdc]"></i>
                        </div>
                        <div class="ml-4 pt-[2px]">
                            <span class="block w-fit h-5 px-1 rounded-[2px] bg-[#eceef1] text-xs leading-5 font-medium text-[#868d99]">Delivering</span>
                            <p class="mt-[8px] text-xs leading-[18px] text-[#aaa]">message:<br>operator: [1106291]ZAKKI MUBAROK</p>
                        </div>
                    </div>
                    <div class="flex h-[81px]">
                        <div class="w-[74px] text-right pt-[1px]"><p class="text-xs leading-[16px] font-bold text-[#555]">13:58:54</p><p class="text-[10px] leading-[18px] text-[#777]">04 Aug 2026</p></div>
                        <div class="flex flex-col items-center w-4 ml-3 pt-[3px]">
                            <svg class="w-[14px] h-[14px] shrink-0" viewBox="0 0 14 14" fill="none" stroke="#bdbfc4"><circle cx="7" cy="7" r="6.500"/><path d="M3.500 7l2.500 2.500 4.500-4.500"/></svg>
                        </div>
                        <div class="ml-4 pt-[2px]">
                            <span class="block w-fit h-5 px-1 rounded-[2px] bg-[#ecfbf0] text-xs leading-5 font-medium text-[#22c55e]">Delivered</span>
                            <p class="mt-[8px] text-xs leading-[18px] text-[#aaa]">message:<br>operator: [1106291]ZAKKI MUBAROK</p>
                        </div>
                    </div>
                </div>
            </div>
        </section>
    </main>
</div>
</body>
</html>
